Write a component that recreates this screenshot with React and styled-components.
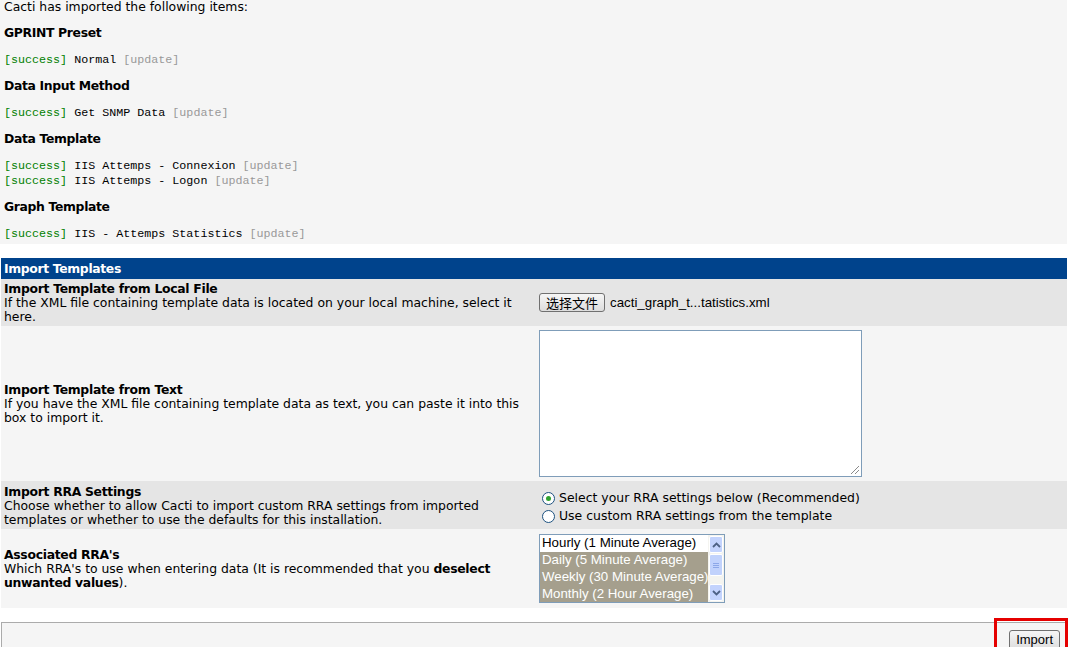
import styled, { createGlobalStyle } from "styled-components";

const GlobalStyle = createGlobalStyle`
  html, body {
    margin: 0;
    padding: 0;
    background: #ffffff;
    font-family: "DejaVu Sans", Verdana, sans-serif;
    overflow: hidden;
  }
`;

const results = [
  { title: "GPRINT Preset", items: ["Normal"] },
  { title: "Data Input Method", items: ["Get SNMP Data"] },
  { title: "Data Template", items: ["IIS Attemps - Connexion", "IIS Attemps - Logon"] },
  { title: "Graph Template", items: ["IIS - Attemps Statistics"] },
];

const rraOptions = [
  { label: "Hourly (1 Minute Average)", selected: false },
  { label: "Daily (5 Minute Average)", selected: true },
  { label: "Weekly (30 Minute Average)", selected: true },
  { label: "Monthly (2 Hour Average)", selected: true },
];

function App() {
  return (
    <Page>
      <GlobalStyle />
      <ResultBox>
        <Intro>Cacti has imported the following items:</Intro>
        {results.map((group) => (
          <div key={group.title}>
            <GroupTitle>{group.title}</GroupTitle>
            <ItemList>
              {group.items.map((item) => (
                <Item key={item}>
                  <Success>[success]</Success> {item} <Update>[update]</Update>
                </Item>
              ))}
            </ItemList>
          </div>
        ))}
      </ResultBox>

      <FormTable>
        <tbody>
          <tr>
            <HeaderCell colSpan={2}>Import Templates</HeaderCell>
          </tr>
          <Row $alt>
            <LabelCell>
              <FieldTitle>Import Template from Local File</FieldTitle>
              If the XML file containing template data is located on your local machine, select it here.
            </LabelCell>
            <FieldCell>
              <FileRow>
                <FileButton>选择文件</FileButton>
                <FileName>cacti_graph_t...tatistics.xml</FileName>
              </FileRow>
            </FieldCell>
          </Row>
          <Row>
            <LabelCell>
              <FieldTitle>Import Template from Text</FieldTitle>
              If you have the XML file containing template data as text, you can paste it into this box to import it.
            </LabelCell>
            <FieldCell>
              <TextBox />
            </FieldCell>
          </Row>
          <Row $alt>
            <LabelCell>
              <FieldTitle>Import RRA Settings</FieldTitle>
              Choose whether to allow Cacti to import custom RRA settings from imported templates or whether to use the defaults for this installation.
            </LabelCell>
            <FieldCell>
              <RadioGroup>
                <RadioLine>
                  <Radio $checked />
                  Select your RRA settings below (Recommended)
                </RadioLine>
                <RadioLine>
                  <Radio />
                  Use custom RRA settings from the template
                </RadioLine>
              </RadioGroup>
            </FieldCell>
          </Row>
          <Row>
            <LabelCell>
              <FieldTitle>Associated RRA's</FieldTitle>
              Which RRA's to use when entering data (It is recommended that you{" "}
              <Strong>deselect</Strong>
              <br />
              <Strong>unwanted values</Strong>).
            </LabelCell>
            <FieldCell>
              <ListBox>
                <Options>
                  {rraOptions.map((opt) => (
                    <Option key={opt.label} $selected={opt.selected}>
                      {opt.label}
                    </Option>
                  ))}
                </Options>
                <ScrollBar>
                  <ScrollBtn>
                    <svg width="9" height="6" viewBox="0 0 9 6">
                      <path d="M1 5 L4.5 1.5 L8 5" fill="none" stroke="#4d6185" strokeWidth="1.8" />
                    </svg>
                  </ScrollBtn>
                  <Thumb>
                    <Grip />
                    <Grip />
                    <Grip />
                  </Thumb>
                  <Track />
                  <ScrollBtn>
                    <svg width="9" height="6" viewBox="0 0 9 6">
                      <path d="M1 1 L4.5 4.5 L8 1" fill="none" stroke="#4d6185" strokeWidth="1.8" />
                    </svg>
                  </ScrollBtn>
                </ScrollBar>
              </ListBox>
            </FieldCell>
          </Row>
        </tbody>
      </FormTable>

      <SaveBar>
        <ImportHighlight>
          <ImportButton>Import</ImportButton>
        </ImportHighlight>
      </SaveBar>
    </Page>
  );
}

const Page = styled.div`
  width: 1070px;
  height: 652px;
  overflow: hidden;
  margin-top: -5px;
`;

const ResultBox = styled.div`
  background: #f5f5f5;
  width: 1067px;
  padding: 4px 0 2px 4px;
  box-sizing: border-box;
  font-size: 12.4px;
  color: #000;
`;

const Intro = styled.div`
  line-height: 16px;
`;

const GroupTitle = styled.div`
  font-weight: bold;
  line-height: 16px;
  margin-top: 10px;
  letter-spacing: -0.35px;
`;

const ItemList = styled.div`
  margin-top: 12px;
`;

const Item = styled.div`
  font-family: "Liberation Mono", "Courier New", monospace;
  font-size: 11.7px;
  line-height: 15px;
`;

const Success = styled.span`
  color: #008000;
`;

const Update = styled.span`
  color: #999999;
`;

const FormTable = styled.table`
  margin: 14px 0 0 1px;
  width: 1066px;
  border-collapse: collapse;
  font-size: 12.4px;
`;

const HeaderCell = styled.td`
  background: #00438c;
  color: #ffffff;
  font-weight: bold;
  letter-spacing: -0.35px;
  padding: 2px 3px;
  height: 16px;
  line-height: 16px;
  border-top: 1px solid #00438c;
`;

const Row = styled.tr`
  background: ${(p) => (p.$alt ? "#e5e5e5" : "#f5f5f5")};
`;

const LabelCell = styled.td`
  width: 50%;
  padding: 3px 3px 2px 3px;
  line-height: 14px;
  vertical-align: middle;
  color: #000;
`;

const FieldTitle = styled.div`
  font-weight: bold;
  letter-spacing: -0.3px;
`;

const Strong = styled.b`
  letter-spacing: -0.3px;
`;

const FieldCell = styled.td`
  padding: 4px 3px 4px 5px;
  vertical-align: middle;
`;

const FileRow = styled.div`
  display: flex;
  align-items: center;
  gap: 5px;
  font-family: "Liberation Sans", Arial, sans-serif;
  font-size: 13.3px;
`;

const FileButton = styled.div`
  height: 17px;
  padding: 0 6px;
  border: 1px solid #707070;
  border-radius: 3px;
  background: linear-gradient(#f6f6f6, #dddddd);
  font-family: "Noto Sans CJK SC", sans-serif;
  font-size: 13px;
  line-height: 17px;
  color: #000;
`;

const FileName = styled.span`
  color: #000;
`;

const TextBox = styled.div`
  width: 321px;
  height: 145px;
  border: 1px solid #7f9db9;
  background: #ffffff;
  position: relative;
  &::after {
    content: "";
    position: absolute;
    right: 2px;
    bottom: 2px;
    width: 8px;
    height: 8px;
    background: linear-gradient(
      135deg,
      transparent 45%,
      #8a8a8a 45%,
      #8a8a8a 52%,
      transparent 52%,
      transparent 70%,
      #8a8a8a 70%,
      #8a8a8a 77%,
      transparent 77%
    );
  }
`;

const RadioGroup = styled.div`
  padding: 4px 0 0 3px;
`;

const RadioLine = styled.div`
  display: flex;
  align-items: center;
  gap: 4px;
  font-size: 12.45px;
  line-height: 18px;
  color: #000;
`;

const Radio = styled.span`
  width: 11px;
  height: 11px;
  border-radius: 50%;
  border: 1px solid #1c5180;
  background: #ffffff;
  position: relative;
  flex: none;
  &::after {
    content: "";
    display: ${(p) => (p.$checked ? "block" : "none")};
    position: absolute;
    left: 3px;
    top: 3px;
    width: 5px;
    height: 5px;
    border-radius: 50%;
    background: #2fa22f;
  }
`;

const ListBox = styled.div`
  display: flex;
  width: 184px;
  height: 67px;
  margin: 1px 0;
  border: 1px solid #7f9db9;
  background: #ffffff;
  overflow: hidden;
`;

const Options = styled.div`
  flex: 1;
  font-family: "Liberation Sans", Arial, sans-serif;
  font-size: 13.3px;
  white-space: nowrap;
  overflow: hidden;
`;

const Option = styled.div`
  height: 17px;
  line-height: 16px;
  padding-left: 2px;
  background: ${(p) => (p.$selected ? "#a59f8d" : "#ffffff")};
  color: ${(p) => (p.$selected ? "#ffffff" : "#000000")};
`;

const ScrollBar = styled.div`
  width: 16px;
  flex: none;
  display: flex;
  flex-direction: column;
  background: #f4f4f0;
`;

const ScrollBtn = styled.div`
  height: 15px;
  margin: 1px;
  border: 1px solid #ffffff;
  border-radius: 2px;
  background: #c3d3fd;
  display: flex;
  align-items: center;
  justify-content: center;
  flex: none;
`;

const Thumb = styled.div`
  height: 20px;
  margin: 0 1px;
  border: 1px solid #ffffff;
  border-radius: 2px;
  background: #c1d2fc;
  display: flex;
  flex-direction: column;
  align-items: center;
  justify-content: center;
  gap: 1px;
`;

const Grip = styled.span`
  width: 6px;
  height: 1px;
  background: #8ca7e8;
`;

const Track = styled.div`
  flex: 1;
`;

const SaveBar = styled.div`
  margin: 14px 0 0 1px;
  width: 1065px;
  height: 46px;
  border: 1px solid #ababab;
  background: #f5f5f5;
  position: relative;
`;

const ImportHighlight = styled.div`
  position: absolute;
  right: -1px;
  top: -5px;
  width: 63px;
  height: 34px;
  border: 3px solid #e50000;
  display: flex;
  align-items: center;
  justify-content: flex-end;
  padding-right: 5px;
  box-sizing: content-box;
`;

const ImportButton = styled.div`
  margin-top: 4px;
  padding: 0 6px;
  height: 18px;
  line-height: 18px;
  border: 1px solid #707070;
  border-radius: 3px;
  background: linear-gradient(#f6f6f6, #dddddd);
  font-family: "Liberation Sans", Arial, sans-serif;
  font-size: 13px;
  color: #000;
`;

export default App;
